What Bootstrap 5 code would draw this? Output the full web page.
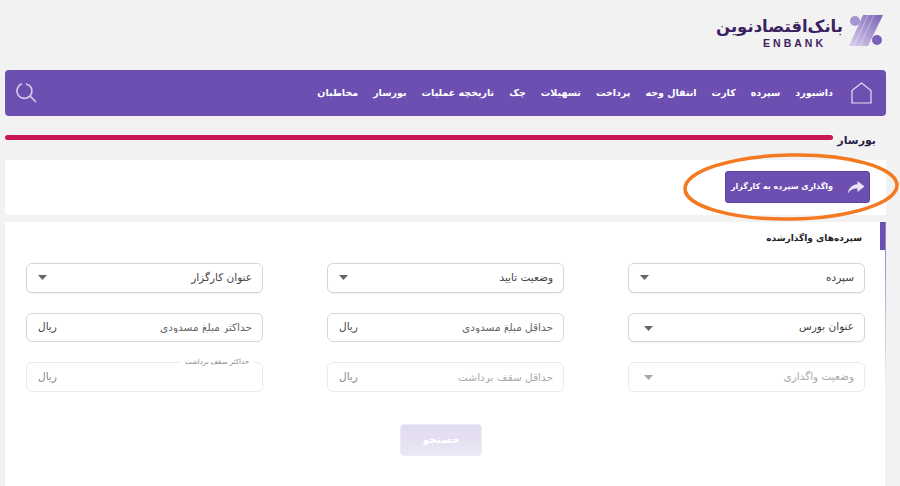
<!DOCTYPE html>
<html lang="fa" dir="rtl">
<head>
  <meta charset="UTF-8" />
  <title>بورسار</title>
  <link href="https://cdn.jsdelivr.net/npm/bootstrap@5.3.0/dist/css/bootstrap.min.css" rel="stylesheet">
  <style>
    html, body { height: 486px; overflow: hidden; }
    body {
      background: #f2f2f2;
      font-family: "DejaVu Sans", "Noto Sans", sans-serif;
      font-size: 10px;
      color: #333;
      position: relative;
    }
    .page-wrap { padding: 0 14px 0 5px; width: 900px; }

    .top-logo { height: 70px; padding: 14px 2px 0 0; gap: 5px; }
    .logo-name { font-size: 16.5px; font-weight: 700; color: #3b2260; line-height: 25px; word-spacing: -6px; white-space: nowrap; }
    .logo-latin { font-family: "Liberation Sans", sans-serif; font-size: 10.5px; font-weight: 700; color: #3b2260; letter-spacing: 3px; line-height: 9px; text-align: right; padding-right: 17px; }

    .main-nav { background: #6c4fb0; height: 46px; border-radius: 4px; padding: 0 14px 0 10px; }
    .main-nav .nav-link { color: #fff; font-size: 9.5px; font-weight: 700; padding: 0; white-space: nowrap; }
    .nav-items { gap: 15px; margin-right: 18px; }

    .title-row { margin-top: 17px; height: 27px; padding-right: 10px; }
    .title-row .page-name { font-size: 11px; font-weight: 700; color: #2c1d47; line-height: 15px; margin-left: 4px; }
    .red-line { height: 5px; background: #c9184f; border-radius: 3px; margin-top: 2px; }

    .action-box { background: #fff; height: 55px; padding: 11px 16px 0 0; }
    .assign-btn {
      background: #6c4fb0; border: 1px solid #5f43a4; color: #fff; height: 32px; width: 145px;
      border-radius: 3px; font-size: 8px; font-weight: 700; padding: 0 4px 0 0; gap: 14px; white-space: nowrap;
    }
    .assign-btn:hover { background: #5f43a4; color: #fff; }

    .filter-box { background: #fff; height: 270px; margin-top: 7px; position: relative; padding: 9px 0 0; }
    .filter-box::after {
      content: ""; position: absolute; top: 0; right: 0; width: 1px; height: 100%;
      background: linear-gradient(to bottom, #8b72c8, #f2f2f2 60%);
    }
    .side-tab { position: absolute; top: 0; right: 0; width: 6px; height: 28px; background: #6c4fb0; }
    .box-title { font-size: 9px; font-weight: 700; color: #222; margin: 0 24px 0 0; line-height: 14px; }

    .filter-grid { display: grid; grid-template-columns: repeat(3, 237px); column-gap: 64px; row-gap: 20px; padding: 18px 21px 0; margin-top: 0; }
    .pick-input.form-select, .amount-box {
      height: 29.5px; border: 1px solid #d5d5d5; border-radius: 6px; font-size: 10.5px; color: #444; background-color: #fff;
    }
    .pick-input.form-select {
      padding: 0 10px 0 24px;
      background-image: url("data:image/svg+xml,%3Csvg xmlns='http://www.w3.org/2000/svg' width='9' height='5'%3E%3Cpath d='M0 0H9L4.5 5Z' fill='%23666'/%3E%3C/svg%3E");
      background-size: 9px 5px;
      background-position: 11px 11px;
      box-shadow: 0 1px 1px rgba(0,0,0,.06);
    }
    .pick-input.arrow-low.form-select { background-position: 15px 12px; }
    .amount-box { padding: 0 10px 0 11px; position: relative; }
    .amount-box .form-control { border: 0; padding: 0; background: transparent; box-shadow: none; font-size: 10.5px; color: #444; height: 100%; }
    .amount-box .form-control::placeholder { color: #666; opacity: 1; }
    .unit-text { font-size: 10.5px; font-weight: 400; color: #444; white-space: nowrap; }

    .field-off.form-select, .field-off.amount-box { border-color: #ebebeb; color: #aaa; box-shadow: none; background-color: #fff; }
    .field-off .form-control::placeholder { color: #aaa; }
    .field-off .unit-text { color: #888; }
    .field-off.pick-input.form-select {
      background-image: url("data:image/svg+xml,%3Csvg xmlns='http://www.w3.org/2000/svg' width='9' height='5'%3E%3Cpath d='M0 0H9L4.5 5Z' fill='%23aaa'/%3E%3C/svg%3E");
    }
    .float-label { position: absolute; top: -5px; right: 8px; background: #fff; padding: 0 5px; font-size: 7px; line-height: 9px; color: #888; }

    .search-btn {
      display: block; width: 82px; height: 32px; margin: 32px 404px 0 0; border: 1px solid #eeeaf6;
      border-radius: 4px; color: #fff; font-size: 10.5px; font-weight: 700; padding: 0;
    }
    .search-btn:disabled { background: linear-gradient(#e1dbef, #ebe7f4); border-color: #eeeaf6; color: #fff; opacity: 1; }

    .note-ring { position: absolute; top: 150px; left: 683px; pointer-events: none; }
  </style>
</head>
<body>
  <div class="page-wrap">
    <div class="top-logo d-flex align-items-start">
      <svg width="36" height="33" viewBox="0 0 36 33" class="flex-shrink-0">
        <defs>
          <linearGradient id="markFill" x1="0" y1="1" x2="1" y2="0">
            <stop offset="0" stop-color="#d9d0ee"/>
            <stop offset="1" stop-color="#7a62b6"/>
          </linearGradient>
        </defs>
        <circle cx="7" cy="7" r="5" fill="#a596d2"/>
        <circle cx="29" cy="26" r="5" fill="#7a62b6"/>
        <polygon points="15,1 35,1 20,32 1,32" fill="url(#markFill)"/>
        <path d="M20 1 L6 32 M26 1 L12 32" stroke="#fff" stroke-opacity=".35" stroke-width="1" fill="none"/>
      </svg>
      <div>
        <div class="logo-name">بانک اقتصادنوین</div>
        <div class="logo-latin">ENBANK</div>
      </div>
    </div>

    <nav class="main-nav d-flex align-items-center justify-content-between">
      <div class="d-flex align-items-center">
        <a href="#" aria-label="خانه" class="d-flex">
          <svg width="21" height="22" viewBox="0 0 21 22" fill="none" stroke="#e4def2" stroke-width="1.2">
            <path d="M1 8.5 L10.5 1 L20 8.5 V21 H1 Z"/>
          </svg>
        </a>
        <div class="nav nav-items">
          <a class="nav-link" href="#">داشبورد</a>
          <a class="nav-link" href="#">سپرده</a>
          <a class="nav-link" href="#">کارت</a>
          <a class="nav-link" href="#">انتقال وجه</a>
          <a class="nav-link" href="#">پرداخت</a>
          <a class="nav-link" href="#">تسهیلات</a>
          <a class="nav-link" href="#">چک</a>
          <a class="nav-link" href="#">تاریخچه عملیات</a>
          <a class="nav-link" href="#">بورسار</a>
          <a class="nav-link" href="#">مخاطبان</a>
        </div>
      </div>
      <a href="#" aria-label="جستجو" class="d-flex">
        <svg width="22" height="22" viewBox="0 0 22 22" fill="none" stroke="#d8cfec" stroke-width="1.6">
          <path d="M7 1.8 A7.5 7.5 0 1 0 16.9 8.5 A7.5 7.5 0 0 0 11 2"/>
          <path d="M15 14 L21 20" stroke-width="1.6"/>
        </svg>
      </a>
    </nav>

    <div class="title-row d-flex align-items-start">
      <span class="page-name">بورسار</span>
      <div class="red-line flex-grow-1"></div>
    </div>

    <div class="action-box">
      <a href="#" class="btn assign-btn d-inline-flex align-items-center">
        <svg width="18" height="13" viewBox="0 0 17 13" fill="#e9e4f5" class="flex-shrink-0">
          <path d="M10 0 L17 5.5 L10 11 V7.6 C5.5 7.4 2.6 9 0.3 12.6 C1 7.4 4.2 3.6 10 3.2 Z"/>
        </svg>
        واگذاری سپرده به کارگزار
      </a>
    </div>

    <div class="filter-box">
      <span class="side-tab"></span>
      <h2 class="box-title">سپرده‌های واگذارشده</h2>
      <form class="filter-grid">
        <select class="form-select pick-input"><option>سپرده</option></select>
        <select class="form-select pick-input"><option>وضعیت تایید</option></select>
        <select class="form-select pick-input"><option>عنوان کارگزار</option></select>

        <select class="form-select pick-input arrow-low"><option>عنوان بورس</option></select>
        <div class="amount-box d-flex align-items-center">
          <input class="form-control" placeholder="حداقل مبلغ مسدودی">
          <span class="unit-text">ریال</span>
        </div>
        <div class="amount-box d-flex align-items-center">
          <input class="form-control" placeholder="حداکثر مبلغ مسدودی">
          <span class="unit-text">ریال</span>
        </div>

        <select class="form-select pick-input arrow-low field-off" disabled><option>وضعیت واگذاری</option></select>
        <div class="amount-box field-off d-flex align-items-center">
          <input class="form-control" placeholder="حداقل سقف برداشت" disabled>
          <span class="unit-text">ریال</span>
        </div>
        <div class="amount-box field-off d-flex align-items-center">
          <span class="float-label">حداکثر سقف برداشت</span>
          <input class="form-control" disabled>
          <span class="unit-text">ریال</span>
        </div>
      </form>
      <button class="btn search-btn" disabled>جستجو</button>
    </div>
  </div>

  <svg class="note-ring" width="217" height="76" viewBox="0 0 217 76" fill="none">
    <ellipse cx="108" cy="37" rx="106" ry="32" stroke="#f47920" stroke-width="3.5" transform="rotate(-1 108 37)"/>
  </svg>
</body>
</html>
